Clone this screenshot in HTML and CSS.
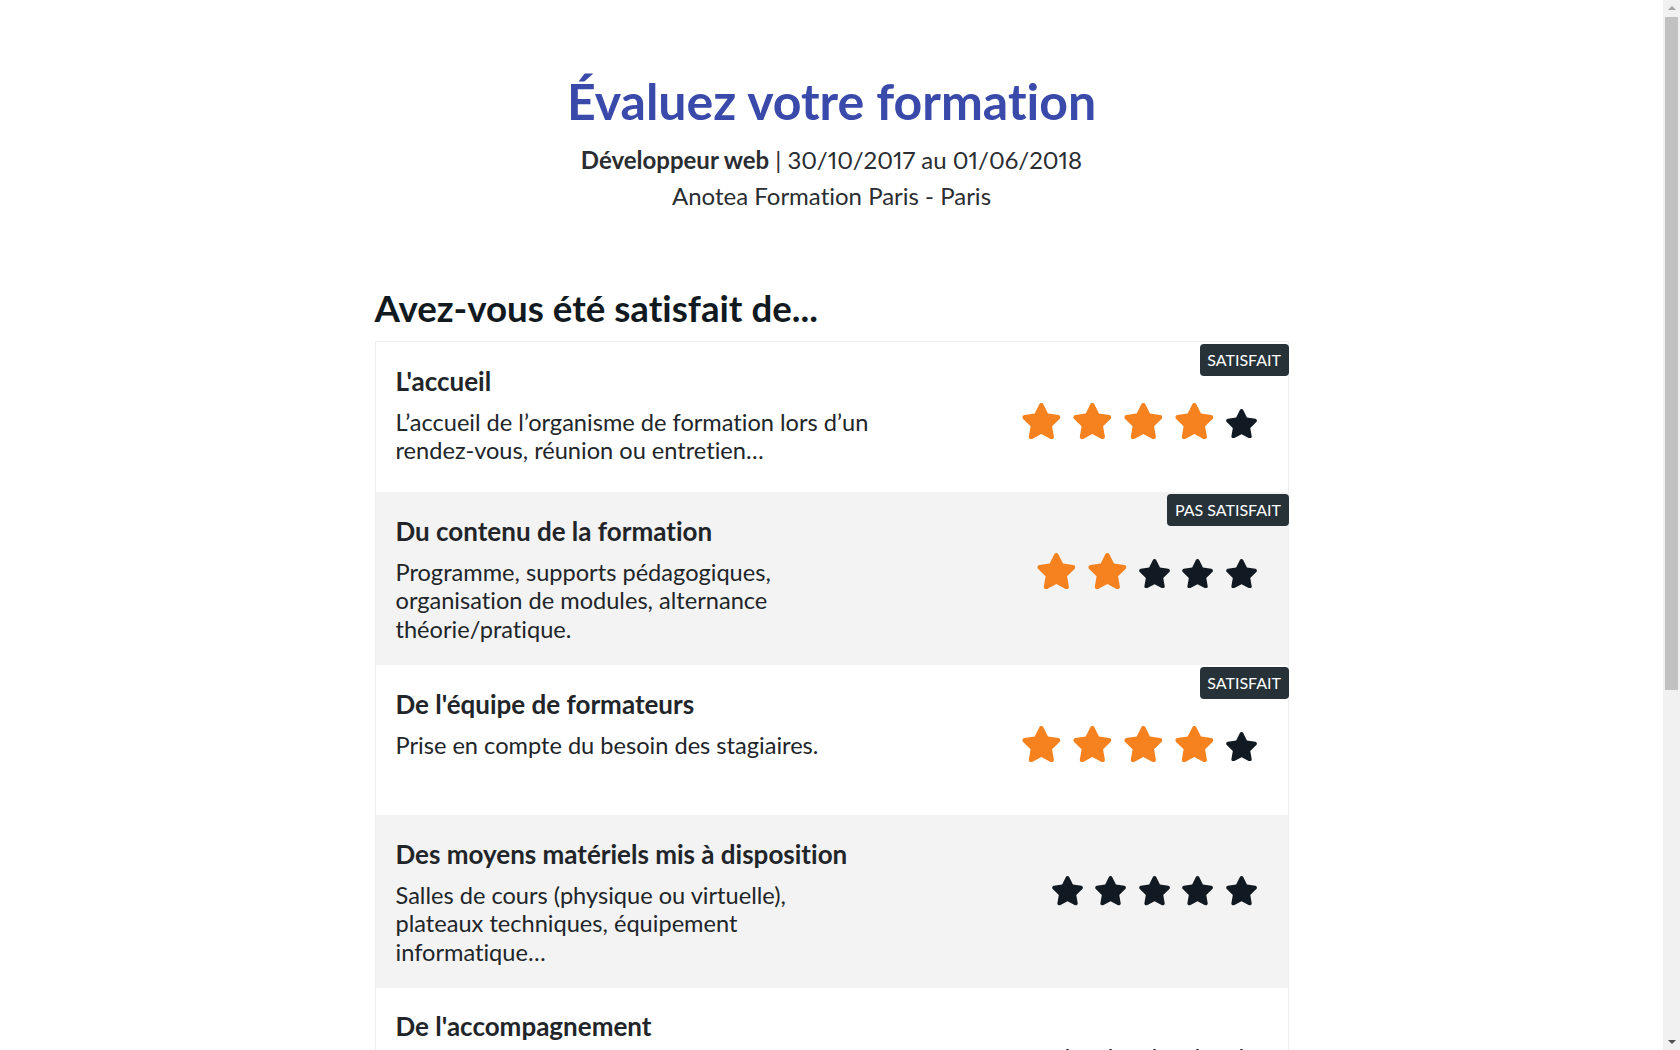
FILE: index.html
```html
<!DOCTYPE html>
<html lang="fr">
<head>
<meta charset="utf-8">
<title>Évaluez votre formation</title>
<link rel="stylesheet" href="styles.css">
</head>
<body>
<svg class="defs" width="0" height="0" aria-hidden="true">
  <symbol id="star" viewBox="0 0 576 512">
    <path d="M259.3 17.8L194 150.2 47.9 171.5c-26.2 3.8-36.7 36.1-17.7 54.6l105.7 103-25 145.5c-4.5 26.3 23.2 46 46.4 33.7L288 439.6l130.7 68.7c23.2 12.2 50.9-7.4 46.4-33.7l-25-145.5 105.7-103c19-18.5 8.5-50.8-17.7-54.6L382 150.2 316.7 17.8c-11.7-23.6-45.6-23.9-57.4 0z"/>
  </symbol>
</svg>

<header class="header">
  <h1 class="title">Évaluez votre formation</h1>
  <p class="subtitle"><strong>Développeur web</strong> | 30/10/2017 au 01/06/2018</p>
  <p class="subtitle">Anotea Formation Paris - Paris</p>
</header>

<main class="main">
  <h2 class="section-title">Avez-vous été satisfait de...</h2>
  <div class="card">
    <div class="row">
      <div class="text">
        <h3 class="row-title">L'accueil</h3>
        <p class="row-desc">L’accueil de l’organisme de formation lors d’un rendez-vous, réunion ou entretien…</p>
      </div>
      <div class="stars">
        <svg class="star on"><use href="#star"/></svg>
        <svg class="star on"><use href="#star"/></svg>
        <svg class="star on"><use href="#star"/></svg>
        <svg class="star on"><use href="#star"/></svg>
        <svg class="star"><use href="#star"/></svg>
      </div>
      <span class="badge">Satisfait</span>
    </div>
    <div class="row alt">
      <div class="text">
        <h3 class="row-title">Du contenu de la formation</h3>
        <p class="row-desc">Programme, supports pédagogiques, organisation de modules, alternance théorie/pratique.</p>
      </div>
      <div class="stars">
        <svg class="star on"><use href="#star"/></svg>
        <svg class="star on"><use href="#star"/></svg>
        <svg class="star"><use href="#star"/></svg>
        <svg class="star"><use href="#star"/></svg>
        <svg class="star"><use href="#star"/></svg>
      </div>
      <span class="badge">Pas satisfait</span>
    </div>
    <div class="row">
      <div class="text">
        <h3 class="row-title">De l'équipe de formateurs</h3>
        <p class="row-desc">Prise en compte du besoin des stagiaires.</p>
      </div>
      <div class="stars">
        <svg class="star on"><use href="#star"/></svg>
        <svg class="star on"><use href="#star"/></svg>
        <svg class="star on"><use href="#star"/></svg>
        <svg class="star on"><use href="#star"/></svg>
        <svg class="star"><use href="#star"/></svg>
      </div>
      <span class="badge">Satisfait</span>
    </div>
    <div class="row alt">
      <div class="text">
        <h3 class="row-title">Des moyens matériels mis à disposition</h3>
        <p class="row-desc">Salles de cours (physique ou virtuelle), plateaux techniques, équipement informatique…</p>
      </div>
      <div class="stars">
        <svg class="star"><use href="#star"/></svg>
        <svg class="star"><use href="#star"/></svg>
        <svg class="star"><use href="#star"/></svg>
        <svg class="star"><use href="#star"/></svg>
        <svg class="star"><use href="#star"/></svg>
      </div>
    </div>
    <div class="row">
      <div class="text">
        <h3 class="row-title">De l'accompagnement</h3>
        <p class="row-desc">Aide à la recherche de stage/emploi, mise en relation, suivi…</p>
      </div>
      <div class="stars">
        <svg class="star"><use href="#star"/></svg>
        <svg class="star"><use href="#star"/></svg>
        <svg class="star"><use href="#star"/></svg>
        <svg class="star"><use href="#star"/></svg>
        <svg class="star"><use href="#star"/></svg>
      </div>
    </div>
  </div>

  <div class="actions">
    <button class="button" type="button">Suivant</button>
  </div>
</main>

<div class="scrollbar" aria-hidden="true">
  <span class="arrow up"></span>
  <span class="thumb"></span>
  <span class="arrow down"></span>
</div>
</body>
</html>
```
FILE: styles.css
```css
html, body {
  margin: 0;
  padding: 0;
}
body {
  font-family: Lato, "Open Sans", sans-serif;
  font-variant-ligatures: none;
  font-feature-settings: "liga" 0, "clig" 0;
  color: #212529;
  background: #fff;
  padding-right: 17px;
}
.defs {
  position: absolute;
  width: 0;
  height: 0;
  overflow: hidden;
}
.header {
  text-align: center;
  padding-top: 71px;
}
.title {
  margin: 0 0 10.5px;
  font-size: 50px;
  line-height: 1.2;
  font-weight: 700;
  color: #3a4aab;
}
.subtitle {
  margin: 0;
  font-size: 24px;
  line-height: 36px;
  color: #2a2d31;
  font-variant-numeric: proportional-nums;
}
.subtitle strong {
  font-weight: 700;
}
.main {
  width: 914px;
  margin: 72px auto 0;
  padding-bottom: 300px;
}
.section-title {
  margin: 0 0 11.5px;
  font-size: 36.7px;
  line-height: 1.2;
  font-weight: 700;
  color: #111921;
}
.card {
  border: 1px solid #eeeeee;
}
.row {
  position: relative;
  display: flex;
  justify-content: space-between;
  align-items: flex-start;
  min-height: 150px;
  box-sizing: border-box;
  padding: 23.5px 20px 21.5px;
  background: #fff;
}
.row.alt {
  background: #f3f3f3;
}
.row-title {
  margin: 0 0 11px;
  font-size: 26px;
  line-height: 1.2;
  font-weight: 700;
  color: #212529;
}
.row-desc {
  margin: 0;
  width: 477px;
  font-size: 23.6px;
  line-height: 28.6px;
  color: #212529;
}
.stars {
  display: flex;
  align-items: flex-end;
  gap: 10.4px;
  margin-top: 37.8px;
  padding-right: 9.6px;
}
.star {
  width: 33.1px;
  height: 29.4px;
  fill: #111a22;
  margin-bottom: 1.2px;
}
.star.on {
  width: 40.7px;
  height: 36.2px;
  fill: #f5821f;
  margin-bottom: 0;
}
.badge {
  position: absolute;
  top: 1.5px;
  right: -1px;
  padding: 5px 7.5px;
  font-size: 16px;
  line-height: 22px;
  text-transform: uppercase;
  color: #fff;
  background: #263238;
  border-radius: 4px;
}
.actions {
  display: flex;
  justify-content: center;
  margin-top: 48px;
}
.button {
  font-family: inherit;
  font-size: 22px;
  font-weight: 700;
  color: #fff;
  background: #3a4aab;
  border: 0;
  border-radius: 4px;
  padding: 14px 48px;
}
.scrollbar {
  position: fixed;
  top: 0;
  right: 0;
  bottom: 0;
  width: 17px;
  background: #f1f1f1;
  display: flex;
  flex-direction: column;
  align-items: center;
}
.arrow {
  display: block;
  width: 0;
  height: 0;
  border-left: 4px solid transparent;
  border-right: 4px solid transparent;
  margin: 6px 0;
}
.arrow.up {
  border-bottom: 4px solid #a3a3a3;
}
.arrow.down {
  margin-top: auto;
  border-top: 4px solid #505050;
}
.thumb {
  display: block;
  width: 13px;
  height: 673px;
  margin-top: 1px;
  background: #c1c1c1;
}
```
